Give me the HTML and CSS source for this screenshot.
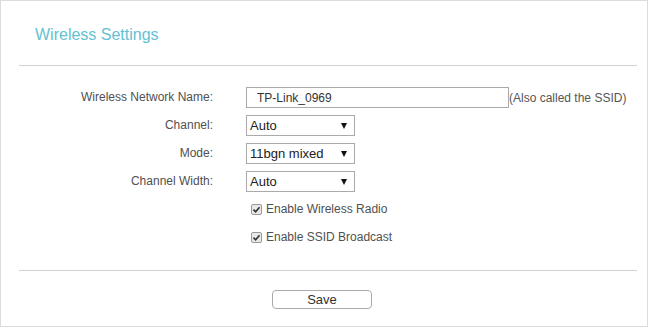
FILE: index.html
```html
<!DOCTYPE html>
<html lang="en">
  <head>
    <meta charset="UTF-8" />
    <title>Wireless Settings</title>
    <link rel="stylesheet" href="styles.css">
  </head>
  <body>
    <div class="panel">
      <h2 class="panel__title">Wireless Settings</h2>
      <hr class="divider" />
      <form class="settings">
        <label class="settings__label" for="ssid">Wireless Network Name:</label>
        <div class="settings__field">
          <input class="text-input" id="ssid" type="text" value="TP-Link_0969" />
          <span class="settings__hint">(Also called the SSID)</span>
        </div>

        <label class="settings__label" for="channel">Channel:</label>
        <div class="settings__field">
          <span class="dropdown">
            <select class="dropdown__select" id="channel">
              <option>Auto</option>
            </select>
          </span>
        </div>

        <label class="settings__label" for="mode">Mode:</label>
        <div class="settings__field">
          <span class="dropdown">
            <select class="dropdown__select" id="mode">
              <option>11bgn mixed</option>
            </select>
          </span>
        </div>

        <label class="settings__label" for="width">Channel Width:</label>
        <div class="settings__field">
          <span class="dropdown">
            <select class="dropdown__select" id="width">
              <option>Auto</option>
            </select>
          </span>
        </div>

        <div class="settings__checks">
          <label class="check">
            <span class="check__box">
              <svg viewBox="0 0 10 10" class="check__icon">
                <path d="M1.6 5.2 L4 7.6 L8.4 2.4" fill="none" stroke="#333" stroke-width="1.8" />
              </svg>
            </span>
            Enable Wireless Radio
          </label>
          <label class="check">
            <span class="check__box">
              <svg viewBox="0 0 10 10" class="check__icon">
                <path d="M1.6 5.2 L4 7.6 L8.4 2.4" fill="none" stroke="#333" stroke-width="1.8" />
              </svg>
            </span>
            Enable SSID Broadcast
          </label>
        </div>
      </form>
      <hr class="divider divider--bottom" />
      <div class="panel__actions">
        <button class="action" type="button">Save</button>
      </div>
    </div>
  </body>
</html>
```

FILE: styles.css
```css
* {
  margin: 0;
  padding: 0;
  box-sizing: border-box;
}
body {
  font-family: "Liberation Sans", Arial, sans-serif;
  font-size: 12px;
  color: #505050;
  background-color: #fff;
}
.panel {
  width: 648px;
  height: 327px;
  border: 1px solid #dcdcdc;
  padding-top: 23px;
}
.panel__title {
  font-size: 16px;
  font-weight: 400;
  line-height: 21px;
  color: #63c1d1;
  padding-left: 34px;
}
.divider {
  border: none;
  border-top: 1px solid #d2d2d2;
  margin: 20px 10px 0 18px;
}
.divider--bottom {
  margin-top: 24px;
}
.settings {
  margin-top: 21px;
  display: grid;
  grid-template-columns: 212px 1fr;
  column-gap: 33px;
  row-gap: 7px;
  align-items: center;
}
.settings__label {
  text-align: right;
  line-height: 21px;
}
.settings__field {
  display: flex;
  align-items: center;
}
.settings__hint {
  color: #555;
}
.text-input {
  width: 263px;
  height: 21px;
  border: 1px solid #aaa;
  padding: 0 10px;
  font-family: inherit;
  font-size: 12px;
  color: #333;
  outline: none;
}
.dropdown {
  position: relative;
  display: inline-block;
}
.dropdown::after {
  content: "";
  position: absolute;
  top: 8px;
  right: 8px;
  border-left: 3.5px solid transparent;
  border-right: 3.5px solid transparent;
  border-top: 6px solid #111;
  pointer-events: none;
}
.dropdown__select {
  -webkit-appearance: none;
  appearance: none;
  width: 109px;
  height: 21px;
  border: 1px solid #aaa;
  border-radius: 0;
  background-color: #fff;
  padding: 0 3px;
  font-family: inherit;
  font-size: 13px;
  color: #222;
  outline: none;
}
.settings__checks {
  grid-column: 2 / 3;
  display: flex;
  flex-direction: column;
  gap: 10px;
  padding-top: 1px;
}
.check {
  display: flex;
  align-items: center;
  height: 18px;
  padding-left: 5px;
  gap: 4px;
}
.check__box {
  display: grid;
  place-items: center;
  width: 11px;
  height: 11px;
  border: 1px solid #999;
  border-radius: 2px;
  background-color: #e9e9e9;
}
.check__icon {
  width: 9px;
  height: 9px;
}
.panel__actions {
  display: flex;
  justify-content: center;
  margin-top: 19px;
}
.action {
  width: 100px;
  height: 19px;
  margin-right: 4px;
  border: 1px solid #aaa;
  border-radius: 4px;
  background-color: #fff;
  font-family: inherit;
  font-size: 13px;
  color: #333;
  cursor: pointer;
}
```
